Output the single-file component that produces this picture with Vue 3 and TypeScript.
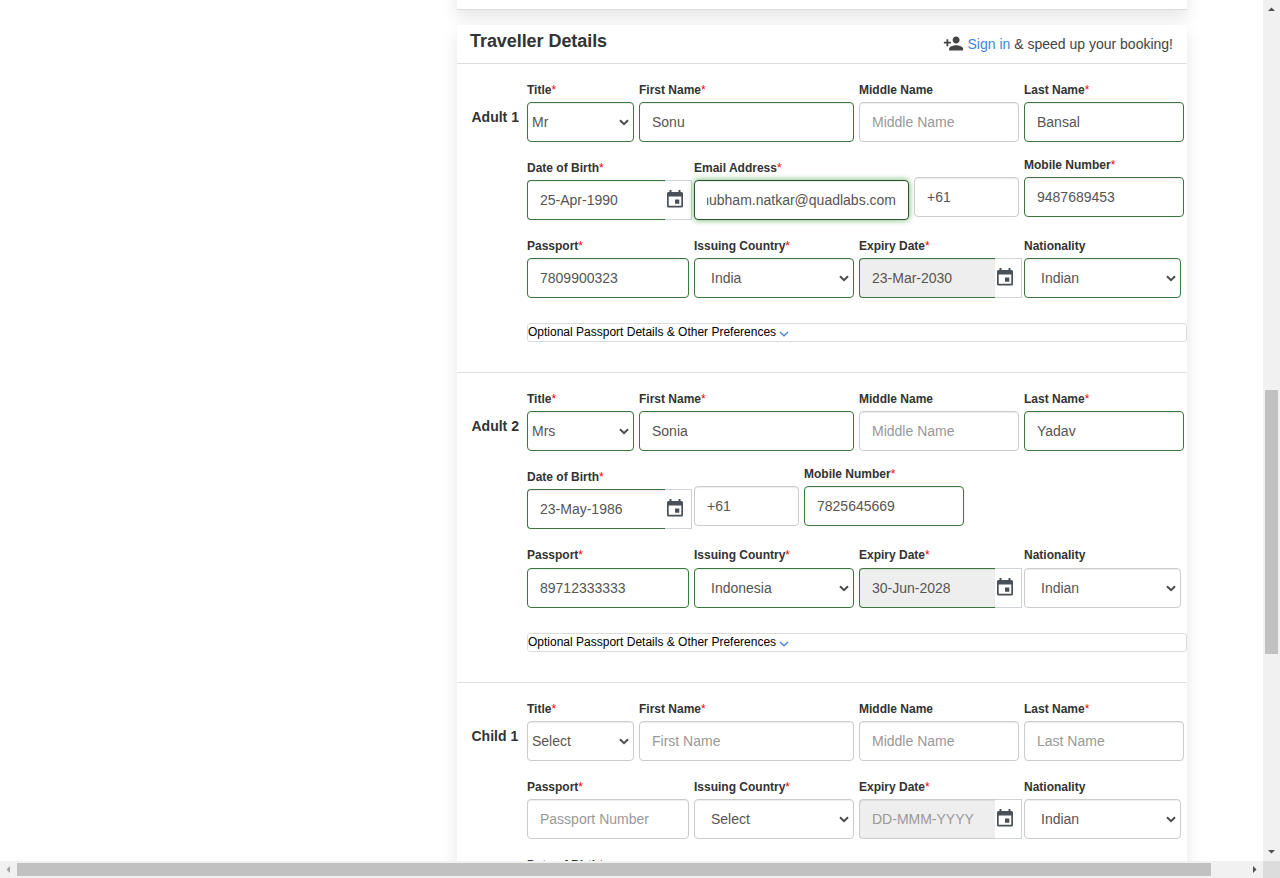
<script setup lang="ts">
type Kind = 'text' | 'select' | 'date'

interface Field {
  label: string
  kind: Kind
  width: string
  value?: string
  placeholder?: string
  required?: boolean
  valid?: boolean
  focused?: boolean
  disabled?: boolean
  compact?: boolean
  raised?: boolean
}

interface Traveller {
  name: string
  rows: Field[][]
  preferences: boolean
}

const nameRow = (title: string, first: string, last: string): Field[] => [
  { label: 'Title', kind: 'select', width: 'w-title', value: title || 'Select', required: true, valid: !!title, compact: true },
  { label: 'First Name', kind: 'text', width: 'w-wide', value: first, placeholder: 'First Name', required: true, valid: !!first },
  { label: 'Middle Name', kind: 'text', width: 'w-mid', placeholder: 'Middle Name' },
  { label: 'Last Name', kind: 'text', width: 'w-mid', value: last, placeholder: 'Last Name', required: true, valid: !!last },
]

const passportRow = (passport: string, country: string, expiry: string, nationalityValid: boolean): Field[] => [
  { label: 'Passport', kind: 'text', width: 'w-doc', value: passport, placeholder: 'Passport Number', required: true, valid: !!passport },
  { label: 'Issuing Country', kind: 'select', width: 'w-mid', value: country || 'Select', required: true, valid: !!country },
  { label: 'Expiry Date', kind: 'date', width: 'w-mid', value: expiry, placeholder: 'DD-MMM-YYYY', required: true, valid: !!expiry, disabled: true },
  { label: 'Nationality', kind: 'select', width: 'w-nat', value: 'Indian', valid: nationalityValid },
]

const travellers: Traveller[] = [
  {
    name: 'Adult 1',
    preferences: true,
    rows: [
      nameRow('Mr', 'Sonu', 'Bansal'),
      [
        { label: 'Date of Birth', kind: 'date', width: 'w-doc', value: '25-Apr-1990', required: true, valid: true },
        { label: 'Email Address', kind: 'text', width: 'w-wide', value: 'shubham.natkar@quadlabs.com', required: true, valid: true, focused: true },
        { label: '', kind: 'text', width: 'w-code', value: '+61', raised: true },
        { label: 'Mobile Number', kind: 'text', width: 'w-mid', value: '9487689453', required: true, valid: true, raised: true },
      ],
      passportRow('7809900323', 'India', '23-Mar-2030', true),
    ],
  },
  {
    name: 'Adult 2',
    preferences: true,
    rows: [
      nameRow('Mrs', 'Sonia', 'Yadav'),
      [
        { label: 'Date of Birth', kind: 'date', width: 'w-doc', value: '23-May-1986', required: true, valid: true },
        { label: '', kind: 'text', width: 'w-code', value: '+61', raised: true },
        { label: 'Mobile Number', kind: 'text', width: 'w-mid', value: '7825645669', required: true, valid: true, raised: true },
      ],
      passportRow('89712333333', 'Indonesia', '30-Jun-2028', false),
    ],
  },
  {
    name: 'Child 1',
    preferences: false,
    rows: [
      nameRow('', '', ''),
      passportRow('', '', '', false),
      [{ label: 'Date of Birth', kind: 'date', width: 'w-doc', placeholder: 'DD-MMM-YYYY', required: true }],
    ],
  },
]
</script>

<template>
  <div class="window">
    <main class="viewport">
      <section class="card previous"></section>
      <section class="card">
        <header class="head">
          <h2>Traveller Details</h2>
          <p class="signin">
            <svg class="person" viewBox="0 0 24 24" width="21" height="21">
              <path d="M15 12c2.210 0 4-1.790 4-4s-1.790-4-4-4-4 1.790-4 4 1.790 4 4 4zm-9-2V7H4v3H1v2h3v3h2v-3h3v-2H6zm9 4c-2.670 0-8 1.340-8 4v2h16v-2c0-2.660-5.330-4-8-4z" fill="#444" />
            </svg>
            <span><a>Sign in</a> &amp; speed up your booking!</span>
          </p>
        </header>

        <article v-for="t in travellers" :key="t.name" class="traveller">
          <h3>{{ t.name }}</h3>
          <div class="rows">
            <div v-for="(row, r) in t.rows" :key="r" class="row">
              <div v-for="(f, i) in row" :key="i" class="field" :class="[f.width, { raised: f.raised }]">
                <label>{{ f.label }}<span v-if="f.required" class="star">*</span></label>
                <div class="group" :class="{ dated: f.kind === 'date' }">
                  <div
                    class="control"
                    :class="[f.kind, { valid: f.valid, focused: f.focused, disabled: f.disabled, compact: f.compact }]"
                  >
                    <span class="value" :class="{ empty: !f.value }">{{ f.value || f.placeholder }}</span>
                    <svg v-if="f.kind === 'select'" class="caret" viewBox="0 0 10 7" width="10" height="7">
                      <path d="M1 1.200L5 5.200L9 1.200" fill="none" stroke="#4d4d4d" stroke-width="2" />
                    </svg>
                  </div>
                  <div v-if="f.kind === 'date'" class="addon">
                    <svg viewBox="0 0 16 18" width="16" height="18">
                      <path d="M2.500 0h2v2h7V0h2v2H14.500A1.500 1.500 0 0 1 16 3.500v12.500a1.500 1.500 0 0 1-1.500 1.500h-13A1.500 1.500 0 0 1 0 16v-12.500A1.500 1.500 0 0 1 1.500 2H2.500zM1.700 6.500V15.800h12.600V6.500zM8 9.500h4.300v4.300H8z" fill="#495057" fill-rule="evenodd" />
                    </svg>
                  </div>
                </div>
              </div>
            </div>
            <div v-if="t.preferences" class="prefs">
              Optional Passport Details &amp; Other Preferences
              <svg viewBox="0 0 10 6" width="10" height="6">
                <path d="M1 1L5 4.800L9 1" fill="none" stroke="#4285d6" stroke-width="1.300" />
              </svg>
            </div>
          </div>
        </article>
      </section>
    </main>

    <div class="bar vertical">
      <svg viewBox="0 0 17 17"><path d="M5 11h7L8.500 7.500z" fill="#505050" /></svg>
      <div class="track"><div class="thumb"></div></div>
      <svg viewBox="0 0 17 17"><path d="M5 6h7L8.500 9.500z" fill="#505050" /></svg>
    </div>
    <div class="bar horizontal">
      <svg viewBox="0 0 17 17"><path d="M10 5v7L6.500 8.500z" fill="#a3a3a3" /></svg>
      <div class="track"><div class="thumb"></div></div>
      <svg viewBox="0 0 17 17"><path d="M7 5v7l3.500-3.500z" fill="#505050" /></svg>
    </div>
    <div class="corner"></div>
  </div>
</template>

<style>
body {
  margin: 0;
  overflow: hidden;
}
</style>

<style scoped>
* {
  box-sizing: border-box;
}
.window {
  display: grid;
  grid-template: 861px 17px / 1263px 17px;
  width: 1280px;
  height: 878px;
  overflow: hidden;
  background: #fff;
  font-family: "Liberation Sans", Arial, sans-serif;
  color: #333;
}
.viewport {
  overflow: hidden;
  padding-left: 457px;
}
.card {
  width: 730px;
  background: #fff;
  box-shadow: 0 8px 16px rgba(0, 0, 0, 0.1);
}
.previous {
  height: 60px;
  margin-top: -50px;
  margin-bottom: 15px;
  border-bottom: 1px solid #dcdcdc;
}
.head {
  display: flex;
  justify-content: space-between;
  height: 39px;
  padding: 0 14px 0 13px;
  border-bottom: 1px solid #dcdcdc;
}
h2 {
  margin: 5px 0 0;
  font-size: 18px;
  line-height: 22px;
  letter-spacing: -0.06px;
}
.signin {
  display: flex;
  align-items: center;
  gap: 4px;
  margin: 0;
  font-size: 14px;
  line-height: 20px;
  color: #444;
}
.person {
  margin-top: -2px;
}
.signin a {
  color: #3b86e0;
}
.traveller {
  display: flex;
  padding-top: 16px;
  border-bottom: 1px solid #dcdfe4;
}
h3 {
  width: 70px;
  flex: none;
  margin: 27px 0 0;
  padding-left: 14.500px;
  font-size: 14px;
  line-height: 20px;
  white-space: nowrap;
}
.rows {
  flex: 1;
  min-width: 0;
}
.row {
  display: flex;
  gap: 5px;
  height: 62px;
}
.row + .row {
  margin-top: 16px;
}
.traveller:nth-of-type(2) .row:nth-child(3) {
  height: 63px;
}
.traveller:nth-of-type(2) .row:nth-child(3) label {
  margin-bottom: 5px;
}
.field {
  flex: none;
}
.raised {
  margin-top: -3px;
}
.w-title { width: 107px; }
.w-wide { width: 215px; }
.w-mid { width: 160px; }
.w-doc { width: 162px; }
.w-nat { width: 157px; }
.w-code { width: 105px; }
label {
  display: block;
  height: 18px;
  margin-bottom: 4px;
  font-size: 12px;
  font-weight: bold;
  line-height: 21px;
  white-space: nowrap;
}
.star {
  font-weight: normal;
  color: #f00;
}
.control {
  display: flex;
  align-items: center;
  height: 40px;
  padding: 0 12px;
  border: 1px solid #ccc;
  border-radius: 4px;
  background: #fff;
  box-shadow: inset 0 1px 1px rgba(0, 0, 0, 0.075);
  overflow: hidden;
  font-size: 14px;
  color: #555;
}
.control.valid {
  border-color: #3c763d;
}
.control.focused {
  justify-content: flex-end;
  border-color: #2b542c;
  box-shadow: inset 0 1px 1px rgba(0, 0, 0, 0.075), 0 0 6px #67b168;
}
.focused .value {
  display: flex;
  justify-content: flex-end;
  width: 189px;
  overflow: hidden;
}
.control.disabled {
  background: #eee;
}
.value {
  white-space: nowrap;
}
.empty {
  color: #999;
}
.select {
  justify-content: space-between;
  padding: 0 4px 0 16px;
}
.select.compact {
  padding-left: 4px;
}
.caret {
  flex: none;
}
.dated {
  display: flex;
}
.date {
  width: 138px;
  flex: none;
  border-right: 0;
  border-radius: 4px 0 0 4px;
}
.disabled.date {
  width: 136px;
}
.addon {
  display: flex;
  align-items: center;
  width: 27px;
  height: 40px;
  flex: none;
  padding: 0 0 2px 2.400px;
  border: 1px solid #ced4da;
  border-left: 0;
  background: #fff;
}
.prefs {
  height: 19px;
  margin: 25px 0 30px;
  border: 1px solid #dcdcdc;
  border-radius: 3px;
  font-size: 12px;
  line-height: 16px;
  color: #000;
}
.prefs svg {
  margin-left: -0.500px;
  vertical-align: -1px;
}
.bar {
  display: flex;
  background: #f1f1f1;
}
.bar svg {
  width: 17px;
  height: 17px;
  flex: none;
}
.track {
  flex: 1;
}
.thumb {
  background: #c1c1c1;
}
.vertical {
  flex-direction: column;
}
.vertical .thumb {
  width: 13px;
  height: 264px;
  margin: 373px 2px 0;
}
.horizontal .thumb {
  width: 1194px;
  height: 13px;
  margin: 2px 0;
}
.corner {
  background: #dcdcdc;
}
</style>
